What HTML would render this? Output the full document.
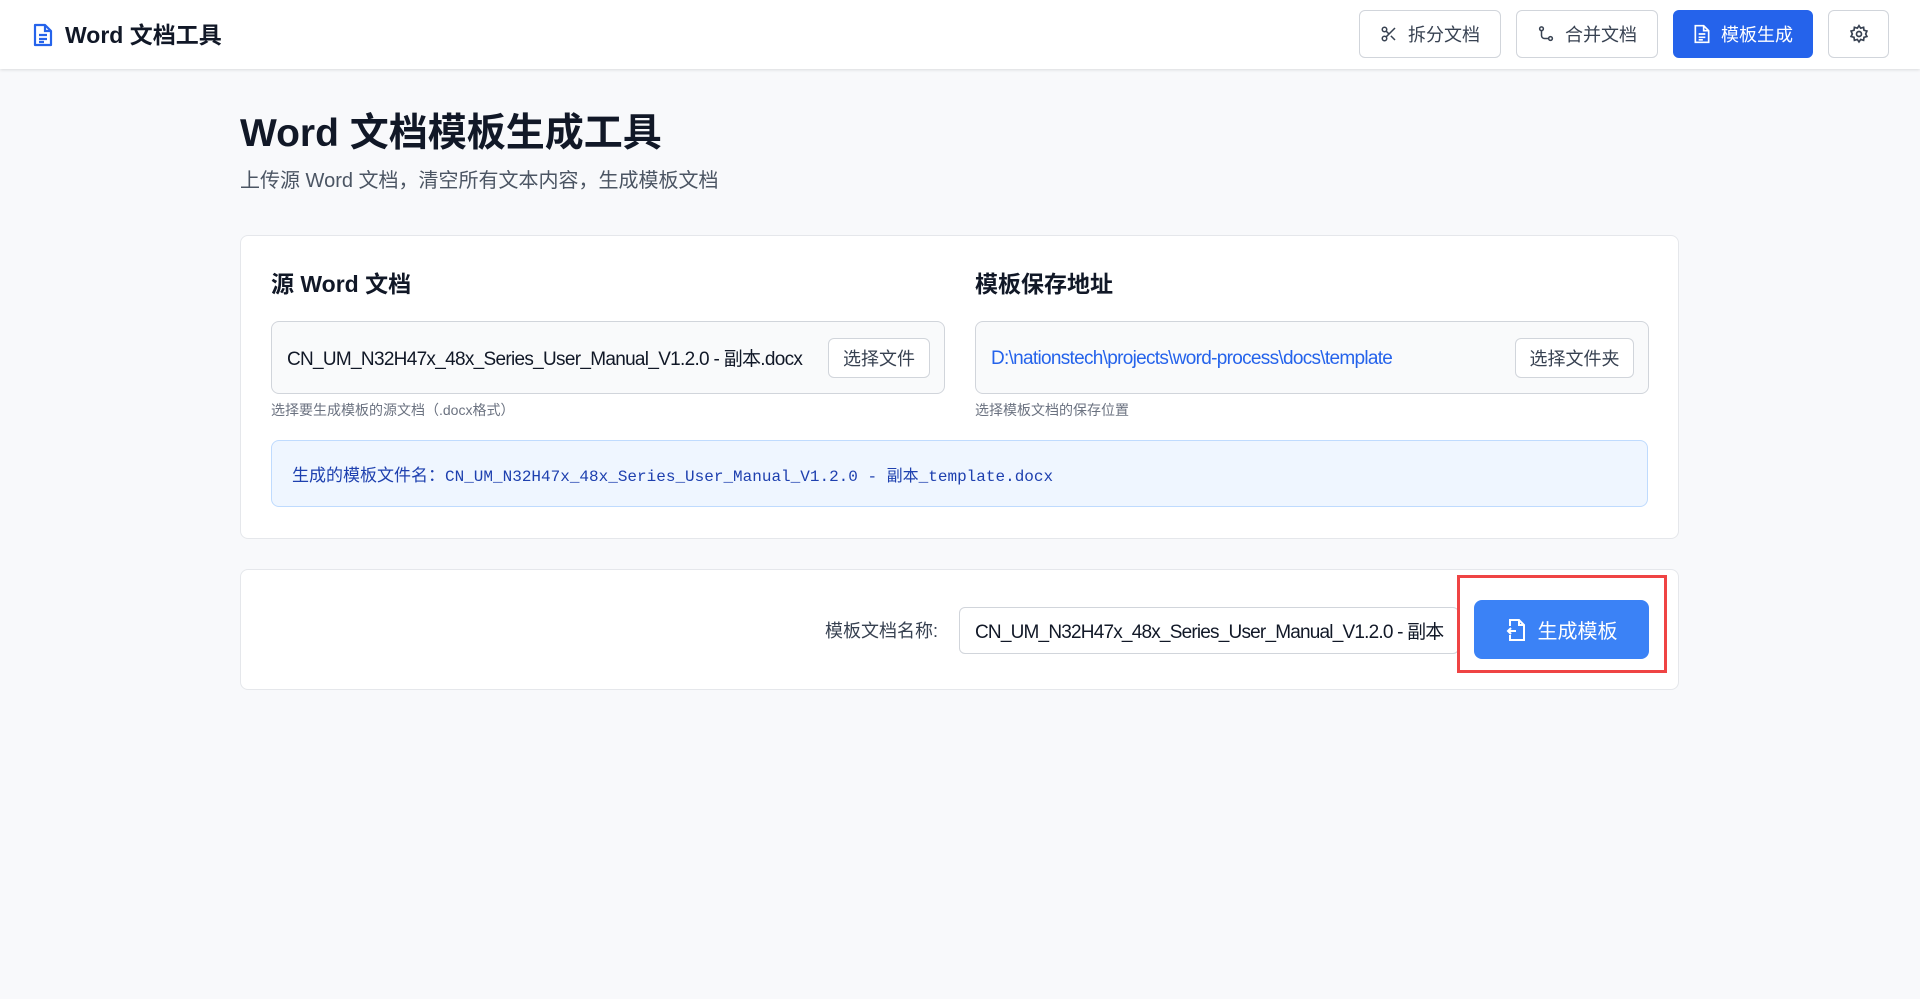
<!DOCTYPE html>
<html><head><meta charset="utf-8"><style>
*{box-sizing:border-box;margin:0;padding:0}
body{width:1920px;height:999px;background:#f8f9fb;font-family:"Liberation Sans","Noto Sans CJK SC",sans-serif;color:#111827;position:relative;overflow:hidden}
.hdr{position:absolute;left:0;top:0;width:1920px;height:69px;background:#fff;box-shadow:0 1px 3px rgba(0,0,0,.12)}
.logo{position:absolute;left:33px;top:23px}
.title{position:absolute;left:65px;top:16px;font-size:23px;font-weight:bold;color:#111827}
.nb{position:absolute;top:10px;height:48px;border:1px solid #d1d5db;border-radius:6px;background:#fff;font-size:18px;color:#374151;display:flex;align-items:center;justify-content:center;gap:10px}
.nb.act{background:#2563eb;border-color:#2563eb;color:#fff}
h1{position:absolute;left:240px;top:102px;font-size:39px;font-weight:bold;color:#111827}
.sub{position:absolute;left:240px;top:164px;font-size:20px;color:#4b5563}
.card{position:absolute;left:240px;width:1439px;background:#fff;border:1px solid #e5e7eb;border-radius:8px}
.h2{position:absolute;top:265px;font-size:23px;font-weight:bold}
.box{position:absolute;top:321px;height:73px;border:1px solid #d1d5db;border-radius:8px;background:#f9fafb;display:flex;align-items:center;padding:0 15px;font-size:19px;letter-spacing:-.7px}
.sbtn{position:absolute;top:16px;height:40px;border:1px solid #d1d5db;border-radius:6px;background:#fff;font-size:18px;color:#374151;display:flex;align-items:center;justify-content:center;letter-spacing:0}
.hint{position:absolute;top:400px;font-size:14px;color:#6b7280}
.info{position:absolute;left:271px;top:440px;width:1377px;height:67px;background:#eff6ff;border:1px solid #bfdbfe;border-radius:8px;display:flex;align-items:center;padding-left:20px;font-size:17px;color:#1e40af}
.mono{font-family:"Liberation Mono","Noto Sans CJK SC",monospace;font-size:16px}
</style></head><body>
<div class="hdr">
<svg class="logo" width="20" height="24" viewBox="0 0 20 24" fill="none" stroke="#2563eb" stroke-width="2.2"><path d="M2 2h10l6 6v14H2z" stroke-linejoin="round"/><path d="M12 2v6h6M6 12h8M6 16h8M6 19h5"/></svg>
<div class="title">Word 文档工具</div>
<div class="nb" style="left:1359px;width:142px"><svg width="18" height="18" viewBox="0 0 24 24" fill="none" stroke="#374151" stroke-width="2"><circle cx="6" cy="6" r="3"/><circle cx="6" cy="18" r="3"/><path d="M20 4L8.1 15.9M14.5 14.5L20 20M8.1 8.1L12 12"/></svg>拆分文档</div>
<div class="nb" style="left:1516px;width:142px"><svg width="18" height="18" viewBox="0 0 24 24" fill="none" stroke="#374151" stroke-width="2"><circle cx="6" cy="5" r="2.5"/><circle cx="18" cy="18" r="2.5"/><path d="M6 8v6a4 4 0 0 0 4 4h5"/></svg>合并文档</div>
<div class="nb act" style="left:1673px;width:140px"><svg width="18" height="20" viewBox="0 0 20 24" fill="none" stroke="#fff" stroke-width="2"><path d="M2 2h10l6 6v14H2z"/><path d="M12 2v6h6M6 12h8M6 16h8M6 19h5"/></svg>模板生成</div>
<div class="nb" style="left:1828px;width:61px"><svg width="20" height="20" viewBox="0 0 24 24" fill="none" stroke="#374151" stroke-width="2"><circle cx="12" cy="12" r="3"/><path d="M12 2l2 3 3.5-1 .5 3.5 3.5 1-1.5 3.5 1.5 3-3.5 1-.5 3.5-3.5-1-2 3-2-3-3.5 1-.5-3.5-3.5-1 1.5-3-1.5-3.5 3.5-1 .5-3.5 3.5 1z"/></svg></div>
</div>
<h1>Word 文档模板生成工具</h1>
<div class="sub">上传源 Word 文档，清空所有文本内容，生成模板文档</div>
<div class="card" style="top:235px;height:304px"></div>
<div class="h2" style="left:271px">源 Word 文档</div>
<div class="h2" style="left:975px">模板保存地址</div>
<div class="box" style="left:271px;width:674px">CN_UM_N32H47x_48x_Series_User_Manual_V1.2.0 - 副本.docx<div class="sbtn" style="left:556px;width:102px">选择文件</div></div>
<div class="box" style="left:975px;width:674px;color:#2563eb;padding-top:2px">D:\nationstech\projects\word-process\docs\template<div class="sbtn" style="left:539px;width:119px">选择文件夹</div></div>
<div class="hint" style="left:271px">选择要生成模板的源文档（.docx格式）</div>
<div class="hint" style="left:975px">选择模板文档的保存位置</div>
<div class="info">生成的模板文件名：<span class="mono">CN_UM_N32H47x_48x_Series_User_Manual_V1.2.0 - 副本_template.docx</span></div>
<div class="card" style="top:569px;height:121px"></div>
<div style="position:absolute;right:982px;top:617px;font-size:18px;color:#374151">模板文档名称:</div>
<div style="position:absolute;left:959px;top:607px;width:500px;height:47px;border:1px solid #d1d5db;border-radius:6px;background:#fff;font-size:19px;letter-spacing:-.8px;padding:0 15px;display:flex;align-items:center;overflow:hidden;white-space:nowrap">CN_UM_N32H47x_48x_Series_User_Manual_V1.2.0 - 副本</div>
<div style="position:absolute;left:1457px;top:575px;width:210px;height:98px;border:3px solid #ef4444"></div>
<div style="position:absolute;left:1474px;top:600px;width:175px;height:59px;background:#3b82f6;border-radius:8px;color:#fff;font-size:20px;display:flex;align-items:center;justify-content:center;gap:12px"><svg width="20" height="24" viewBox="0 0 20 24" fill="none" stroke="#fff" stroke-width="2"><path d="M4 8V2h9l5 5v15H4v-5"/><path d="M13 2v5h5M10 13H2M5 10l-3 3 3 3"/></svg>生成模板</div>
</body></html>
